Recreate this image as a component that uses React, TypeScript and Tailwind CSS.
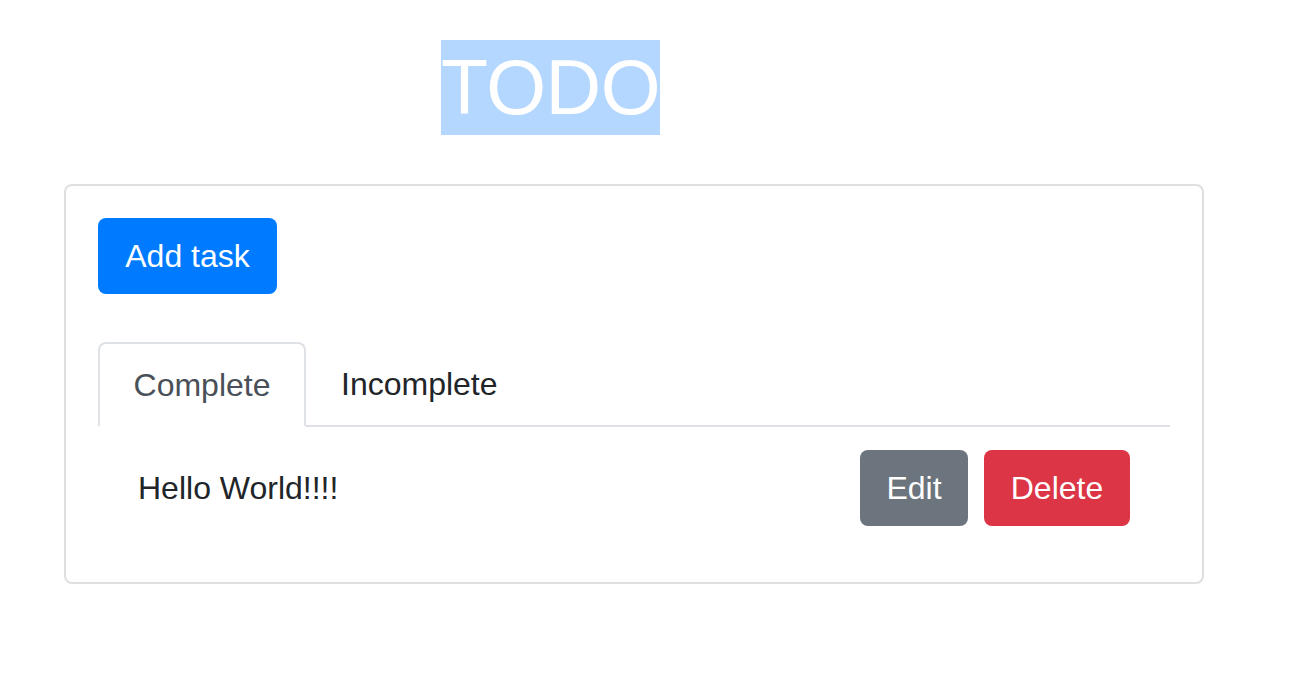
import React from "react";

export default function App() {
  return (
    <div
      className="min-h-[686px] w-[1290px] bg-white text-[#212529]"
      style={{ fontFamily: '"Liberation Sans", Arial, sans-serif' }}
    >
      <div className="pt-[40px] pl-[441px]">
        <h1 className="inline-block bg-[#b4d7ff] text-white text-[77px] leading-[95px] tracking-[-0.5px] font-normal">
          TODO
        </h1>
      </div>
      <div className="ml-[64px] mt-[49px] w-[1140px] h-[400px] rounded-[8px] border-2 border-[#dfdfdf] p-[32px]">
        <button className="h-[76px] w-[179px] rounded-[8px] bg-[#007bff] text-white text-[32px] leading-[48px]">
          Add task
        </button>
        <div className="mt-[48px] flex border-b-2 border-[#dee2e6]">
          <div className="-mb-[2px] flex h-[85px] w-[208px] items-center justify-center rounded-t-[8px] border-2 border-[#dee2e6] border-b-white bg-white text-[32px] leading-[48px] text-[#495057]">
            Complete
          </div>
          <div className="flex h-[83px] items-center pl-[35px] text-[32px] leading-[48px] text-[#212529]">
            Incomplete
          </div>
        </div>
        <div className="mt-[23px] flex items-center justify-between px-[40px]">
          <span className="text-[32px] leading-[48px]">Hello World!!!!</span>
          <div className="flex gap-[16px]">
            <button className="h-[76px] w-[108px] rounded-[8px] bg-[#6c757d] text-white text-[32px] leading-[48px]">
              Edit
            </button>
            <button className="h-[76px] w-[146px] rounded-[8px] bg-[#dc3545] text-white text-[32px] leading-[48px]">
              Delete
            </button>
          </div>
        </div>
      </div>
    </div>
  );
}
